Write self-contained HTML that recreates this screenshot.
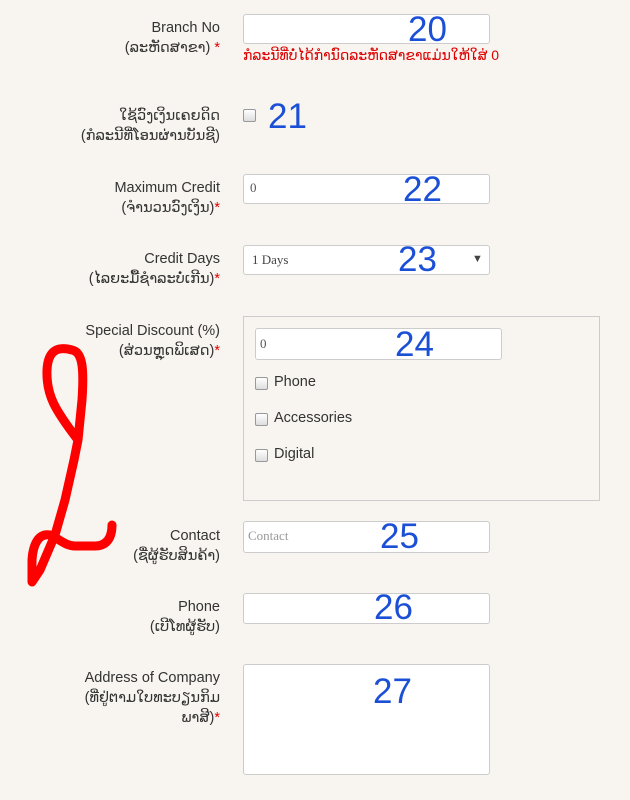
<!DOCTYPE html>
<html><head><meta charset="utf-8"><style>
body{margin:0;width:630px;height:800px;background:#f8f5f0;position:relative;overflow:hidden;font-family:"Liberation Sans","DejaVu Sans",sans-serif;color:#333;font-size:14px}
.a{position:absolute}
.lb{position:absolute;right:410px;text-align:right;line-height:20px;font-size:14.5px;white-space:nowrap}
.r{color:#d00}
.in{position:absolute;left:243px;width:247px;height:29px;background:#fff;border:1px solid #ccc;border-radius:3px;box-sizing:border-box}
.n{position:absolute;color:#1a4fd6;font-size:35px;line-height:36px;font-family:"Liberation Sans",sans-serif}
.ph{position:absolute;font-family:"Liberation Serif",serif;font-size:13px;color:#555}
.cb{position:absolute;width:11px;height:11px;border:1px solid #999;border-radius:2px;background:linear-gradient(#fff,#ddd)}
</style></head><body>
<div class="lb" style="top:18px">Branch No<br>(ລະຫັດສາຂາ) <span class="r">*</span></div>
<div class="in" style="top:14px;height:30px"></div>
<div class="n" style="left:408px;top:12px">20</div>
<div class="a r" style="left:243px;top:47px;font-size:14px">ກໍລະນີທີ່ບໍ່ໄດ້ກຳນົດລະຫັດສາຂາແມ່ນໃຫ້ໃສ່ 0</div>

<div class="lb" style="top:106px">ໃຊ້ວົງເງິນເຄຍດິດ<br>(ກໍລະນີທີ່ໂອນຜ່ານບັນຊີ)</div>
<div class="cb" style="left:243px;top:109px"></div>
<div class="n" style="left:268px;top:99px">21</div>

<div class="lb" style="top:178px">Maximum Credit<br>(ຈຳນວນວົງເງິນ)<span class="r">*</span></div>
<div class="in" style="top:174px;height:30px"></div>
<div class="ph" style="left:250px;top:180px">0</div>
<div class="n" style="left:403px;top:172px">22</div>

<div class="lb" style="top:249px">Credit Days<br>(ໄລຍະມື້ຊຳລະບໍ່ເກີນ)<span class="r">*</span></div>
<div class="in" style="top:245px;height:30px"></div>
<div class="ph" style="left:252px;top:252px;color:#444">1 Days</div>
<div class="a" style="left:472px;top:253px;font-size:11px;color:#444">▼</div>
<div class="n" style="left:398px;top:242px">23</div>

<div class="lb" style="top:321px">Special Discount (%)<br>(ສ່ວນຫຼຸດພິເສດ)<span class="r">*</span></div>
<div class="a" style="left:243px;top:316px;width:357px;height:185px;border:1px solid #ccc;box-sizing:border-box"></div>
<div class="in" style="left:255px;top:328px;width:247px;height:32px"></div>
<div class="ph" style="left:260px;top:336px">0</div>
<div class="n" style="left:395px;top:327px">24</div>
<div class="cb" style="left:255px;top:377px"></div><div class="a" style="left:274px;top:374px;font-size:14.5px">Phone</div>
<div class="cb" style="left:255px;top:413px"></div><div class="a" style="left:274px;top:410px;font-size:14.5px">Accessories</div>
<div class="cb" style="left:255px;top:449px"></div><div class="a" style="left:274px;top:446px;font-size:14.5px">Digital</div>

<div class="lb" style="top:526px">Contact<br>(ຊື່ຜູ້ຮັບສິນຄ້າ)</div>
<div class="in" style="top:521px;height:32px"></div>
<div class="ph" style="left:248px;top:528px;color:#999">Contact</div>
<div class="n" style="left:380px;top:519px">25</div>

<div class="lb" style="top:597px">Phone<br>(ເບີໂທຜູ້ຮັບ)</div>
<div class="in" style="top:593px;height:31px"></div>
<div class="n" style="left:374px;top:590px">26</div>

<div class="lb" style="top:668px">Address of Company<br>(ທີ່ຢູ່ຕາມໃບທະບຽນກິມ<br>ພາສີ)<span class="r">*</span></div>
<div class="in" style="top:664px;height:111px"></div>
<div class="n" style="left:373px;top:674px">27</div>

<svg class="a" style="left:0;top:0" width="630" height="800"><path d="M112,525 C112,540 105,546 95,546 L75,546 C65,546 58,538 50,535 C38,533 33,545 32,560 L32,582 L40,570 L55,535 L65,500 L74,460 L78,440 L82,400 C84,370 83,352 72,350 C58,346 48,350 47,370 C46,395 55,410 78,440" fill="none" stroke="#f00" stroke-width="9" stroke-linecap="round" stroke-linejoin="round"/></svg>
</body></html>
